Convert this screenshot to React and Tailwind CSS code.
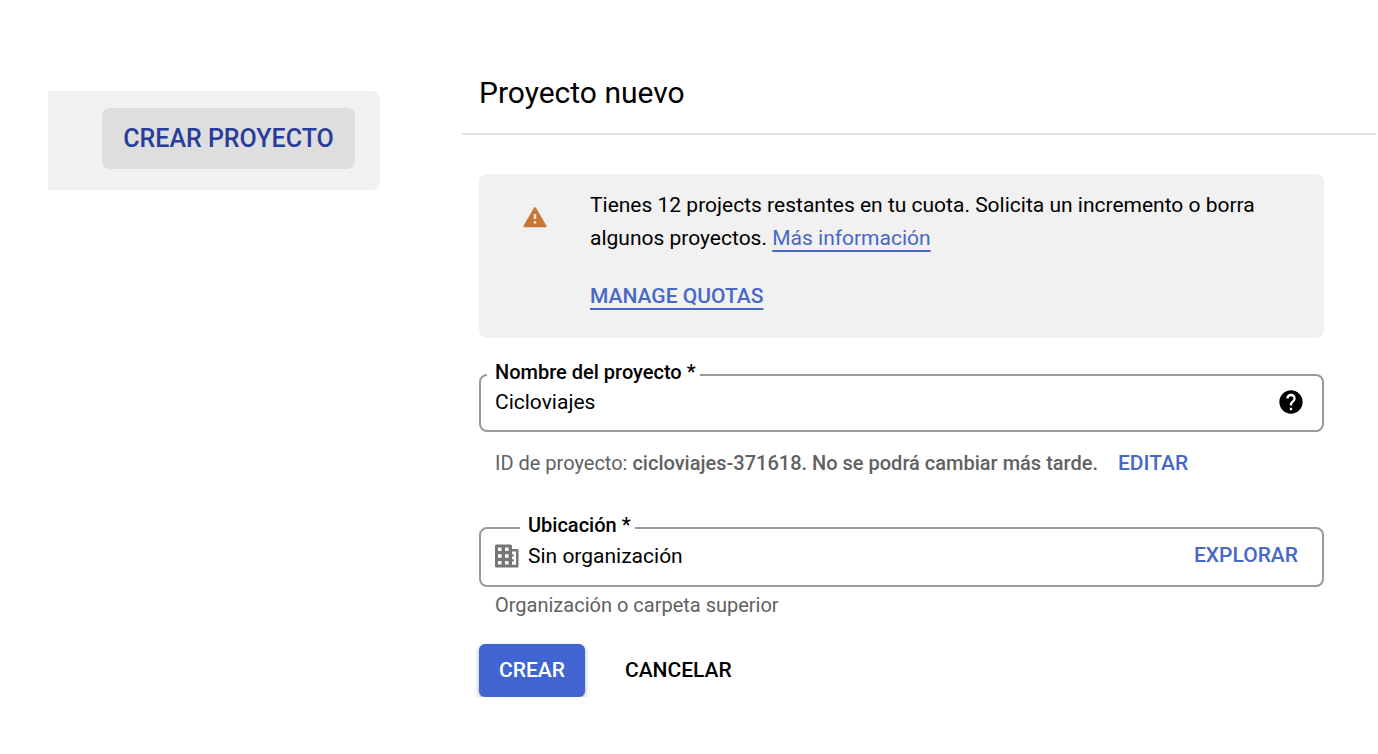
import { MdHelp } from "react-icons/md";

function WarningIcon() {
  return (
    <svg viewBox="0 0 24 22" className="h-[22px] w-6 shrink-0" aria-hidden="true">
      <path
        d="M12 2 L22.6 20.2 H1.4 Z"
        fill="#cb7533"
        stroke="#cb7533"
        strokeWidth="2"
        strokeLinejoin="round"
      />
      <path d="M10.8 8h2.4v5h-2.4zM10.8 15.2h2.4v2.4h-2.4z" fill="#f1f1f1" />
    </svg>
  );
}

function OrganizationIcon() {
  return (
    <svg viewBox="0 0 24 24" className="size-6 shrink-0" aria-hidden="true">
      <path
        fillRule="evenodd"
        fill="#757575"
        d="M1.5 0.5H15.5Q17 0.5 17 2V5H22Q23.5 5 23.5 6.5V22Q23.5 23.5 22 23.5H1.5Q0 23.5 0 22V2Q0 0.5 1.5 0.5Z
          M3 3.5V7H6.6V3.5ZM10 3.5V7H13.6V3.5Z
          M3 10.2V13.7H6.6V10.2ZM10 10.2V13.7H13.6V10.2Z
          M3 17V20.5H6.6V17ZM10 17V20.5H13.6V17Z
          M17 7.6V10.3H18.8V12.6H17V15.3H18.8V17.6H17V20.8H21V7.6Z"
      />
    </svg>
  );
}

export default function App() {
  return (
    <div className="flex items-start bg-white pl-12 pr-0.5 font-[Roboto,sans-serif] text-black">
      <div className="mt-[91px] w-[332px] shrink-0 rounded-r-lg bg-[#f1f1f1] pb-[21px] pl-[54px] pr-[25px] pt-[17px]">
        <button
          type="button"
          className="h-[61px] w-full whitespace-nowrap rounded-lg bg-[#dedede] text-[25px] font-medium text-[#283c9b]"
        >
          CREAR PROYECTO
        </button>
      </div>

      <main className="ml-[82px] min-w-0 flex-1">
        <header className="border-b-2 border-[#e2e2e2] pb-5 pl-[17px] pt-[73px]">
          <h1 className="text-[30px] leading-10">Proyecto nuevo</h1>
        </header>

        <form className="pl-[17px] pr-[52px] pt-[39px]" onSubmit={(e) => e.preventDefault()}>
          <section className="flex rounded-lg bg-[#f1f1f1] pb-[25px] pl-11 pr-10 pt-[15px]">
            <div className="pt-[17px]">
              <WarningIcon />
            </div>
            <div className="ml-[43px] text-[21px] leading-[33px]">
              <p>
                Tienes 12 projects restantes en tu cuota. Solicita un incremento o borra algunos
                proyectos.{" "}
                <a
                  href="#informacion"
                  className="text-[#4768c8] underline decoration-2 underline-offset-[5px] [text-decoration-skip-ink:none]"
                >
                  Más información
                </a>
              </p>
              <p className="mt-[25px]">
                <a
                  href="#quotas"
                  className="font-medium text-[#4768c8] underline decoration-2 underline-offset-[5px] [text-decoration-skip-ink:none]"
                >
                  MANAGE QUOTAS
                </a>
              </p>
            </div>
          </section>

          <fieldset className="mt-6 rounded-lg border-2 border-[#999999] pb-[14px] pl-[14px] pr-[17px]">
            <legend className="-ml-2 pb-1.5 pl-2 pr-1 text-xl font-medium leading-5">
              <label htmlFor="project-name">Nombre del proyecto *</label>
            </legend>
            <div className="flex h-7 items-center">
              <input
                id="project-name"
                type="text"
                defaultValue="Cicloviajes"
                className="min-w-0 flex-1 bg-transparent text-[21px] leading-7 outline-none"
              />
              <button type="button" aria-label="Ayuda">
                <MdHelp className="size-7" />
              </button>
            </div>
          </fieldset>

          <div className="mt-[15px] flex items-center gap-5 pl-4 text-xl leading-8 text-[#616161]">
            <p>
              ID de proyecto:{" "}
              <strong className="font-medium">
                cicloviajes-371618. No se podrá cambiar más tarde.
              </strong>
            </p>
            <button type="button" className="text-[21px] font-medium text-[#4768c8]">
              EDITAR
            </button>
          </div>

          <fieldset className="mt-9 rounded-lg border-2 border-[#999999] pb-[15px] pl-[14px] pr-6">
            <legend className="ml-[25px] pb-1.5 pl-2 pr-1 text-xl font-medium leading-5">
              <label htmlFor="location">Ubicación *</label>
            </legend>
            <div className="mt-px flex h-7 items-center">
              <OrganizationIcon />
              <input
                id="location"
                type="text"
                readOnly
                defaultValue="Sin organización"
                className="ml-[9px] min-w-0 flex-1 bg-transparent text-[21px] leading-7 outline-none"
              />
              <button type="button" className="text-[21px] font-medium text-[#4768c8]">
                EXPLORAR
              </button>
            </div>
          </fieldset>
          <p className="mt-1 pl-4 text-xl leading-7 text-[#616161]">
            Organización o carpeta superior
          </p>

          <div className="mt-[25px] flex gap-5 text-[21px] font-medium">
            <button
              type="submit"
              className="h-[53px] rounded-md bg-[#4065d0] px-5 text-white shadow-[0_2px_4px_rgba(0,0,0,0.35)]"
            >
              CREAR
            </button>
            <button type="button" className="h-[53px] px-5">
              CANCELAR
            </button>
          </div>
        </form>
      </main>
    </div>
  );
}
